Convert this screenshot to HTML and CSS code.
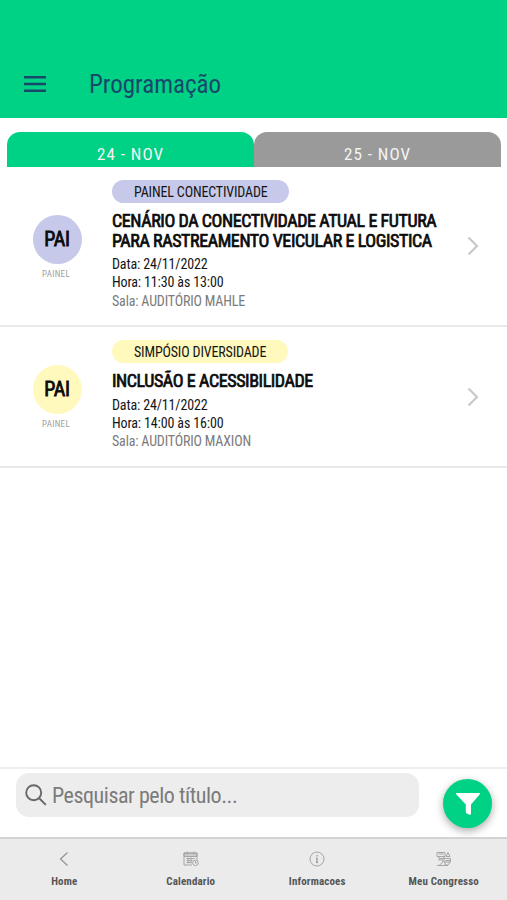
FILE: index.html
```html
<!DOCTYPE html>
<html lang="pt-BR">
<head>
<meta charset="utf-8">
<meta name="viewport" content="width=device-width, initial-scale=1">
<title>Programação</title>
<link rel="stylesheet" href="styles.css">
</head>
<body>
<header class="header">
  <svg class="menu" viewBox="0 0 22 16"><path d="M0 1.2h22M0 8h22M0 14.8h22"/></svg>
  <h1>Programação</h1>
</header>
<nav class="tabs">
  <div class="tab active">24 - NOV</div>
  <div class="tab">25 - NOV</div>
</nav>
<main class="list">
  <article class="item first">
    <div class="side"><div class="avatar">PAI</div><div class="kind">PAINEL</div></div>
    <div class="body">
      <div class="pill"><span>PAINEL CONECTIVIDADE</span></div>
      <h2>CENÁRIO DA CONECTIVIDADE ATUAL E FUTURA<br>PARA RASTREAMENTO VEICULAR E LOGISTICA</h2>
      <p>Data: 24/11/2022</p><p>Hora: 11:30 às 13:00</p><p class="room">Sala: AUDITÓRIO MAHLE</p>
    </div>
    <svg class="chev" viewBox="0 0 12 20"><path d="M1.500 1.500 10 10l-8.500 8.500"/></svg>
  </article>
  <article class="item second">
    <div class="side"><div class="avatar">PAI</div><div class="kind">PAINEL</div></div>
    <div class="body">
      <div class="pill"><span>SIMPÓSIO DIVERSIDADE</span></div>
      <h2>INCLUSÃO E ACESSIBILIDADE</h2>
      <p>Data: 24/11/2022</p><p>Hora: 14:00 às 16:00</p><p class="room">Sala: AUDITÓRIO MAXION</p>
    </div>
    <svg class="chev" viewBox="0 0 12 20"><path d="M1.500 1.500 10 10l-8.500 8.500"/></svg>
  </article>
</main>
<section class="search">
  <div class="field">
    <svg viewBox="0 0 22 22"><circle cx="8.700" cy="8.700" r="7.500"/><path d="m14 14 6.800 6.800"/></svg>
    <span>Pesquisar pelo título...</span>
  </div>
  <div class="fab"><svg viewBox="0 0 26 24"><path d="M1.800 1h22.400q1.400 0 .6 1.200L16 12.500v9.300q0 1.200-1.300 1l-3-1.300q-.9-.4-.9-1.400V12.500L1.200 2.200Q.4 1 1.800 1z"/></svg></div>
</section>
<footer class="bar">
  <div class="nav"><svg viewBox="0 0 16 16"><path d="M11.500 1.500 4.500 8l7 6.500" stroke-width="1.200"/></svg><span>Home</span></div>
  <div class="nav"><svg viewBox="0 0 16 16" class="soft"><path class="fill" d="M1 2h13v3.500H1z"/><path d="M1 2h13v7M1 2v12h8M4 .5v3M11 .5v3M3.500 7.500h8M3.500 9.500h6M3.500 11.500h5M5 6.500v6M8 6.500v6"/><circle cx="12.500" cy="11.800" r="2.800"/><path d="M12.500 10v2h1.500"/></svg><span>Calendario</span></div>
  <div class="nav"><svg viewBox="0 0 16 16"><circle cx="8" cy="8" r="7"/><path d="M8 7v4.500M8 4v1.600M7 7h1M7 11.500h2" stroke-width="1.200"/></svg><span>Informacoes</span></div>
  <div class="nav"><svg viewBox="0 0 16 16" class="soft"><path d="M1 1.500h8v4H1zM2.500 3h5M3 5.500h5v2H3zM10 5.500l2-4 2 4zM2 9h5v2L3 14.500h5M8 7.500h6.500V11H8zM9.500 9.500h5M9 11v3h3l2-3M1 14.500h11"/></svg><span>Meu Congresso</span></div>
</footer>
</body>
</html>
```
FILE: styles.css
```css
* { box-sizing: border-box; margin: 0; padding: 0; }
body { width: 507px; height: 900px; display: flex; flex-direction: column; overflow: hidden; background: #fff; color: #151515; font-family: "Roboto Condensed", Roboto, sans-serif; font-stretch: 75%; }
svg { display: block; fill: none; stroke: currentColor; }
.header { height: 118px; padding: 50px 24px 0; background: #00d285; color: #17486b; display: flex; align-items: center; gap: 43px; }
.menu { width: 22px; height: 16px; stroke-width: 2.400; }
h1 { font-size: 25px; font-weight: 400; letter-spacing: 0; line-height: 30px; padding-top: 2px; white-space: nowrap; }
.tabs { display: flex; margin: 14px 6px 0 7px; height: 35px; }
.tab { flex: 1; background: #9a9a9a; color: #f4f4f4; border-radius: 13px 13px 0 0; text-align: center; font-size: 17px; line-height: 20px; padding-top: 12px; letter-spacing: 1px; }
.tab.active { background: #00d285; }
.list { flex: 1; }
.item { display: flex; border-bottom: 2px solid #e9e9e9; padding-top: 13px; }
.first { height: 160px; --tint: #c6c9e9; }
.second { height: 141px; --tint: #fff9bd; }
.side { width: 112px; padding-top: 35px; display: flex; flex-direction: column; align-items: center; }
.second .side { padding-top: 25px; }
.avatar { width: 49px; height: 49px; border-radius: 50%; background: var(--tint); text-align: center; line-height: 48px; font-size: 20px; letter-spacing: -.2px; font-weight: 400; -webkit-text-stroke: .8px #0b0b0b; color: #0b0b0b; margin-left: 2px; }
.kind { font-size: 9px; line-height: 11px; color: #a0a0a0; margin-top: 5px; letter-spacing: .3px; }
.body { width: 348px; white-space: nowrap; }
.pill { width: 177px; height: 23px; border-radius: 12px; background: var(--tint); padding-left: 22px; font-size: 14px; letter-spacing: -.15px; line-height: 24px; }
.second .pill { width: 176px; }
h2 { font-size: 18px; line-height: 19.500px; font-weight: 400; letter-spacing: -.42px; -webkit-text-stroke: .7px #0b0b0b; margin: 8px 0 5px; color: #0b0b0b; }
p { font-size: 14px; line-height: 18.300px; letter-spacing: -.14px; }
.room { color: #7b7b7b; letter-spacing: -.17px; }
.chev { width: 12px; height: 20px; margin: 56px 0 0 7px; color: #c7c9c8; stroke-width: 2.200; }
.second .chev { margin-top: 47px; }
.search { height: 70px; border-top: 2px solid #eee; padding: 4px 15px 0 16px; display: flex; justify-content: space-between; }
.field { width: 403px; height: 44px; border-radius: 13px; background: #ededed; color: #7b7b7b; display: flex; align-items: center; gap: 5px; padding-left: 9px; font-size: 22px; line-height: 43px; letter-spacing: -.45px; white-space: nowrap; }
.field svg { width: 22px; height: 22px; stroke: #686868; stroke-width: 1.900; }
.fab { width: 49px; height: 49px; margin-top: 6px; border-radius: 50%; background: #00d285; display: grid; place-items: center; box-shadow: 0 3px 8px #0005; }
.fab svg { width: 26px; height: 24px; fill: #fff; stroke: none; }
.bar { height: 63px; border-top: 2px solid #d3d3d3; background: #ebebeb; display: flex; padding-left: 1px; }
.nav { flex: 1; display: flex; flex-direction: column; align-items: center; padding-top: 12px; font-size: 11px; line-height: 14px; font-weight: 700; color: #565656; letter-spacing: .15px; white-space: nowrap; }
.nav svg { width: 16px; height: 16px; color: #929292; stroke-width: .8; margin-bottom: 8px; }
.nav .soft { color: #a5a5a5; stroke-width: 1; }
.fill { fill: #ccc; }
```
